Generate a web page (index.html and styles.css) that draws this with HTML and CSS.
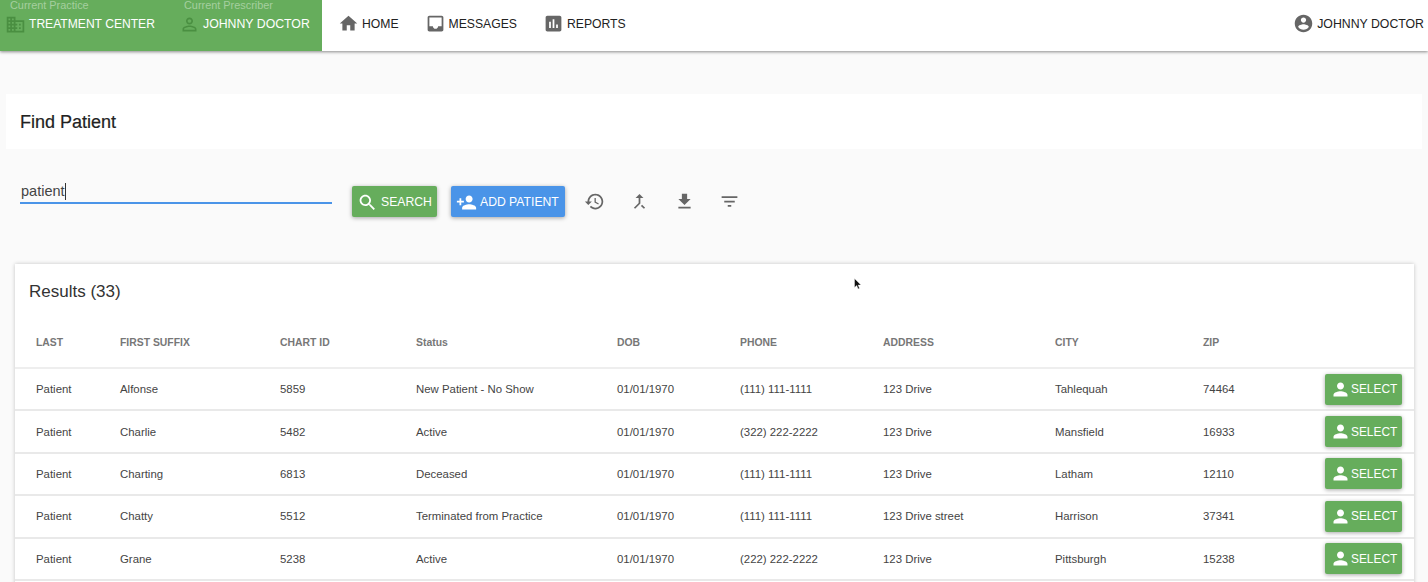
FILE: index.html
```html
<!DOCTYPE html>
<html lang="en">
<head>
    <meta charset="UTF-8">
    <meta name="viewport" content="width=device-width, initial-scale=1.0">
    <title>Find Patient</title>
    <link rel="stylesheet" href="styles.css">
</head>
<body>
    <svg class="icon-defs" aria-hidden="true">
        <symbol id="i-home" viewBox="0 0 24 24"><path d="M10 20v-6h4v6h5v-8h3L12 3 2 12h3v8z"/></symbol>
        <symbol id="i-inbox" viewBox="0 0 24 24"><path d="M19 3H4.99C3.88 3 3 3.9 3 5l.01 14c0 1.1.88 2 1.99 2h14c1.1 0 2-.9 2-2V5c0-1.1-.9-2-2-2zm0 12h-4c0 1.66-1.35 3-3 3s-3-1.34-3-3H4.99V5H19v10z"/></symbol>
        <symbol id="i-chart" viewBox="0 0 24 24"><path d="M19 3H5c-1.1 0-2 .9-2 2v14c0 1.1.9 2 2 2h14c1.1 0 2-.9 2-2V5c0-1.1-.9-2-2-2zM9 17H7v-7h2v7zm4 0h-2V7h2v10zm4 0h-2v-4h2v4z"/></symbol>
        <symbol id="i-account" viewBox="0 0 24 24"><path d="M12 2C6.48 2 2 6.48 2 12s4.48 10 10 10 10-4.48 10-10S17.52 2 12 2zm0 3c1.66 0 3 1.34 3 3s-1.34 3-3 3-3-1.34-3-3 1.34-3 3-3zm0 14.2c-2.5 0-4.71-1.28-6-3.22.03-1.99 4-3.08 6-3.08 1.99 0 5.97 1.09 6 3.08-1.29 1.94-3.5 3.22-6 3.22z"/></symbol>
        <symbol id="i-domain" viewBox="0 0 24 24"><path d="M12 7V3H2v18h20V7H12zM6 19H4v-2h2v2zm0-4H4v-2h2v2zm0-4H4V9h2v2zm0-4H4V5h2v2zm4 12H8v-2h2v2zm0-4H8v-2h2v2zm0-4H8V9h2v2zm0-4H8V5h2v2zm10 12h-8v-2h2v-2h-2v-2h2v-2h-2V9h8v10zm-2-8h-2v2h2v-2zm0 4h-2v2h2v-2z"/></symbol>
        <symbol id="i-person-outline" viewBox="0 0 24 24"><path d="M12 5.9c1.16 0 2.1.94 2.1 2.1s-.94 2.1-2.1 2.1S9.9 9.16 9.9 8s.94-2.1 2.1-2.1m0 9c2.97 0 6.1 1.46 6.1 2.1v1.1H5.9V17c0-.64 3.13-2.1 6.1-2.1M12 4C9.79 4 8 5.79 8 8s1.79 4 4 4 4-1.79 4-4-1.79-4-4-4zm0 9c-2.67 0-8 1.34-8 4v3h16v-3c0-2.66-5.33-4-8-4z"/></symbol>
        <symbol id="i-search" viewBox="0 0 24 24"><path d="M15.5 14h-.79l-.28-.27C15.41 12.59 16 11.11 16 9.5 16 5.91 13.09 3 9.5 3S3 5.91 3 9.5 5.91 16 9.5 16c1.61 0 3.09-.59 4.23-1.57l.27.28v.79l5 4.99L20.49 19l-4.99-5zm-6 0C7.01 14 5 11.99 5 9.5S7.01 5 9.5 5 14 7.01 14 9.5 11.99 14 9.5 14z"/></symbol>
        <symbol id="i-person-add" viewBox="0 0 24 24"><path d="M15 12c2.21 0 4-1.79 4-4s-1.79-4-4-4-4 1.79-4 4 1.79 4 4 4zm-9-2V7H4v3H1v2h3v3h2v-3h3v-2H6zm9 4c-2.67 0-8 1.34-8 4v2h16v-2c0-2.66-5.33-4-8-4z"/></symbol>
        <symbol id="i-history" viewBox="0 0 24 24"><path d="M13 3c-4.97 0-9 4.03-9 9H1l3.89 3.89.07.14L9 12H6c0-3.87 3.13-7 7-7s7 3.13 7 7-3.13 7-7 7c-1.93 0-3.68-.79-4.94-2.06l-1.42 1.42C8.27 19.99 10.51 21 13 21c4.97 0 9-4.03 9-9s-4.03-9-9-9zm-1 5v5l4.28 2.54.72-1.21-3.5-2.08V8H12z"/></symbol>
        <symbol id="i-merge" viewBox="0 0 24 24"><path d="M17 20.41L18.41 19 15 15.59 13.59 17 17 20.41zM7.5 8H11v5.59L5.59 19 7 20.41l6-6V8h3.5L12 3.5 7.5 8z"/></symbol>
        <symbol id="i-download" viewBox="0 0 24 24"><path d="M19 9h-4V3H9v6H5l7 7 7-7zM5 18v2h14v-2H5z"/></symbol>
        <symbol id="i-filter" viewBox="0 0 24 24"><path d="M10 18h4v-2h-4v2zM3 6v2h18V6H3zm3 7h12v-2H6v2z"/></symbol>
        <symbol id="i-person" viewBox="0 0 24 24"><path d="M12 12c2.21 0 4-1.79 4-4s-1.79-4-4-4-4 1.79-4 4 1.79 4 4 4zm0 2c-2.67 0-8 1.34-8 4v2h16v-2c0-2.66-5.33-4-8-4z"/></symbol>
    </svg>

    <header class="topbar">
        <div class="context">
            <div class="context-item context-practice">
                <div class="context-label">Current Practice</div>
                <div class="context-value"><svg class="icon context-icon"><use href="#i-domain"/></svg>TREATMENT CENTER</div>
            </div>
            <div class="context-item context-prescriber">
                <div class="context-label">Current Prescriber</div>
                <div class="context-value"><svg class="icon context-icon"><use href="#i-person-outline"/></svg>JOHNNY DOCTOR</div>
            </div>
        </div>
        <nav class="nav">
            <a class="nav-link"><svg class="icon"><use href="#i-home"/></svg>HOME</a>
            <a class="nav-link"><svg class="icon"><use href="#i-inbox"/></svg>MESSAGES</a>
            <a class="nav-link"><svg class="icon"><use href="#i-chart"/></svg>REPORTS</a>
        </nav>
        <a class="nav-link user-link"><svg class="icon"><use href="#i-account"/></svg>JOHNNY DOCTOR</a>
    </header>

    <section class="title-band">
        <h1>Find Patient</h1>
    </section>

    <section class="search-row">
        <div class="search-field"><span>patient</span><i class="caret"></i></div>
        <button class="btn btn-green search-btn"><svg class="icon"><use href="#i-search"/></svg>SEARCH</button>
        <button class="btn btn-blue"><svg class="icon"><use href="#i-person-add"/></svg>ADD PATIENT</button>
        <div class="tools">
            <svg class="icon"><use href="#i-history"/></svg>
            <svg class="icon"><use href="#i-merge"/></svg>
            <svg class="icon"><use href="#i-download"/></svg>
            <svg class="icon"><use href="#i-filter"/></svg>
        </div>
    </section>

    <section class="results">
        <h2>Results (33)</h2>
        <table class="results-table">
            <thead>
                <tr>
                    <th class="col-last">LAST</th>
                    <th class="col-first">FIRST SUFFIX</th>
                    <th class="col-chart">CHART ID</th>
                    <th class="col-status">Status</th>
                    <th class="col-dob">DOB</th>
                    <th class="col-phone">PHONE</th>
                    <th class="col-address">ADDRESS</th>
                    <th class="col-city">CITY</th>
                    <th class="col-zip">ZIP</th>
                    <th></th>
                </tr>
            </thead>
            <tbody>
                <tr>
                    <td>Patient</td><td>Alfonse</td><td>5859</td><td>New Patient - No Show</td><td>01/01/1970</td><td>(111) 111-1111</td><td>123 Drive</td><td>Tahlequah</td><td>74464</td>
                    <td class="action"><button class="btn btn-green select-btn"><svg class="icon"><use href="#i-person"/></svg>SELECT</button></td>
                </tr>
                <tr>
                    <td>Patient</td><td>Charlie</td><td>5482</td><td>Active</td><td>01/01/1970</td><td>(322) 222-2222</td><td>123 Drive</td><td>Mansfield</td><td>16933</td>
                    <td class="action"><button class="btn btn-green select-btn"><svg class="icon"><use href="#i-person"/></svg>SELECT</button></td>
                </tr>
                <tr>
                    <td>Patient</td><td>Charting</td><td>6813</td><td>Deceased</td><td>01/01/1970</td><td>(111) 111-1111</td><td>123 Drive</td><td>Latham</td><td>12110</td>
                    <td class="action"><button class="btn btn-green select-btn"><svg class="icon"><use href="#i-person"/></svg>SELECT</button></td>
                </tr>
                <tr>
                    <td>Patient</td><td>Chatty</td><td>5512</td><td>Terminated from Practice</td><td>01/01/1970</td><td>(111) 111-1111</td><td>123 Drive street</td><td>Harrison</td><td>37341</td>
                    <td class="action"><button class="btn btn-green select-btn"><svg class="icon"><use href="#i-person"/></svg>SELECT</button></td>
                </tr>
                <tr>
                    <td>Patient</td><td>Grane</td><td>5238</td><td>Active</td><td>01/01/1970</td><td>(222) 222-2222</td><td>123 Drive</td><td>Pittsburgh</td><td>15238</td>
                    <td class="action"><button class="btn btn-green select-btn"><svg class="icon"><use href="#i-person"/></svg>SELECT</button></td>
                </tr>
            </tbody>
        </table>
    </section>

    <svg class="cursor" viewBox="0 0 8 12" aria-hidden="true"><path d="M0.5 0.5v9l2.2-2 1.4 3.4 1.4-.6-1.4-3.2h2.9z"/></svg>
</body>
</html>
```

FILE: styles.css
```css
* {
    box-sizing: border-box;
}
html, body {
    height: 582px;
    overflow: hidden;
}
body {
    margin: 0;
    font-family: "Liberation Sans", Arial, sans-serif;
    background-color: #fafafa;
    color: #333;
    position: relative;
}
.icon-defs {
    display: none;
}
.icon {
    width: 21px;
    height: 21px;
    fill: currentColor;
    flex: none;
}

/* top bar */
.topbar {
    display: flex;
    align-items: stretch;
    height: 51px;
    background: white;
    box-shadow: 0 1px 3px rgba(0, 0, 0, 0.45);
}
.context {
    display: flex;
    width: 322px;
    background-color: #66ad5c;
    color: white;
}
.context-item {
    padding-left: 5px;
}
.context-practice {
    width: 174px;
}
.context-label {
    font-size: 10.9px;
    line-height: 11px;
    color: #a5cf9f;
    padding-left: 5px;
}
.context-value {
    display: flex;
    align-items: center;
    gap: 3px;
    font-size: 12.1px;
    margin-top: 3px;
    height: 20px;
    white-space: nowrap;
}
.context-prescriber .context-value {
    font-size: 12.3px;
}
.context-icon {
    color: #4a8f41;
}
.nav {
    display: flex;
    padding-left: 16px;
    gap: 26px;
}
.nav-link {
    display: flex;
    align-items: center;
    gap: 3px;
    height: 47px;
    font-size: 12.2px;
    color: #222;
    white-space: nowrap;
}
.nav-link .icon {
    color: #666;
}
.user-link {
    margin-left: auto;
    padding-right: 4px;
    font-size: 12.3px;
}

/* page title */
.title-band {
    margin: 43px 6px 0;
    height: 55px;
    background: white;
    display: flex;
    align-items: center;
    padding: 1px 0 0 14px;
}
h1 {
    margin: 0;
    font-size: 18px;
    font-weight: normal;
    color: #222;
    -webkit-text-stroke: 0.2px #222;
}

/* search row */
.search-row {
    display: flex;
    align-items: center;
    height: 32px;
    margin: 36px 0 0 20px;
}
.search-field {
    width: 312px;
    height: 24px;
    margin-bottom: 18px;
    padding: 3px 0 0 1px;
    border-bottom: 2px solid #4a94e8;
    font-size: 14.5px;
    color: #444;
    display: flex;
    align-items: flex-start;
}
.caret {
    width: 1px;
    height: 17px;
    background: #333;
}
.btn {
    display: inline-flex;
    align-items: center;
    border: none;
    border-radius: 2px;
    color: white;
    font-family: inherit;
    font-size: 12.2px;
    height: 31px;
    gap: 3px;
    padding: 2px 5px 0;
    box-shadow: 0 1px 4px rgba(0, 0, 0, 0.35);
    white-space: nowrap;
}
.btn-green {
    background-color: #66ad5c;
}
.btn-blue {
    background-color: #4a94e8;
    width: 114px;
    margin-left: 14px;
}
.search-btn {
    width: 85px;
    margin-left: 20px;
}
.tools {
    display: flex;
    gap: 24px;
    margin-left: 19px;
    margin-top: 1px;
    color: #666;
}

/* results card */
.results {
    margin: 47px 14px 0 15px;
    background: white;
    box-shadow: 0 0 4px rgba(0, 0, 0, 0.22);
    padding-bottom: 40px;
}
h2 {
    margin: 0;
    font-size: 17px;
    font-weight: normal;
    color: #333;
    padding: 18px 0 0 14px;
    height: 56px;
}
.results-table {
    width: 100%;
    border-collapse: collapse;
    table-layout: fixed;
    font-size: 11.4px;
}
.results-table th {
    height: 48px;
    text-align: left;
    font-size: 10.4px;
    color: #777;
    padding: 0 0 2px 21px;
    border-bottom: 2px solid #eee;
}
.results-table td {
    height: 42.4px;
    padding: 0 0 0 21px;
    color: #444;
    border-bottom: 2px solid #e9e9e9;
}
.col-last { width: 84px; }
.col-first { width: 160px; }
.col-chart { width: 136px; }
.col-status { width: 201px; }
.col-dob { width: 123px; }
.col-phone { width: 143px; }
.col-address { width: 172px; }
.col-city { width: 148px; }
.col-zip { width: 100px; }
.results-table .action {
    text-align: right;
    padding: 0 12px 0 0;
}
.select-btn {
    width: 77px;
    gap: 0;
    padding-top: 0;
    font-size: 11.9px;
    vertical-align: middle;
}

.cursor {
    position: absolute;
    left: 854px;
    top: 278px;
    width: 8px;
    height: 12px;
    fill: #111;
    stroke: white;
    stroke-width: 0.4;
}
```
